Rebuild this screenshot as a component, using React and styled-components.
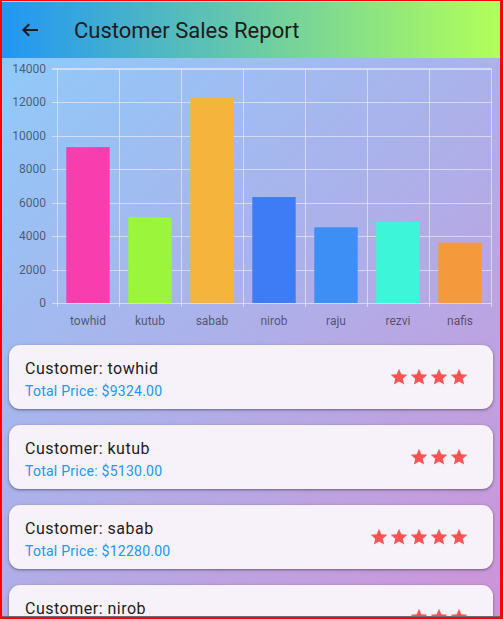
import React from "react";
import styled, { createGlobalStyle } from "styled-components";

const Global = createGlobalStyle`
  * { box-sizing: border-box; }
  html, body { margin: 0; padding: 0; background: #fff; }
  body { font-family: Roboto, "Noto Sans", "Liberation Sans", sans-serif; }
`;

const Frame = styled.div`
  width: 503px;
  height: 619px;
  border-style: solid;
  border-color: #ff0000;
  border-width: 1px 3px 2px 2px;
  display: flex;
  flex-direction: column;
  overflow: hidden;
`;

const AppBar = styled.header`
  flex: 0 0 57px;
  display: flex;
  align-items: center;
  border-top: 1px solid rgba(225, 228, 232, 0.8);
  background: linear-gradient(to right, #2196f3, #b2ff59);
`;

const Leading = styled.button`
  width: 56px;
  height: 56px;
  border: 0;
  padding: 0;
  background: transparent;
  display: flex;
  align-items: center;
  justify-content: center;
  color: #1d1b20;
  cursor: pointer;
`;

const Title = styled.h1`
  margin: 0 0 0 16px;
  font-size: 22px;
  font-weight: 400;
  line-height: 28px;
  color: #1d1b20;
  position: relative;
  top: 1px;
`;

const Body = styled.main`
  flex: 1 1 auto;
  overflow: hidden;
  background: linear-gradient(138.25deg, #90caf9, #ce93d8);
  border-bottom: 1px solid #6b6870;
  display: flex;
  flex-direction: column;
`;

const ChartBox = styled.section`
  flex: 0 0 279px;
  height: 279px;
`;

const AxisText = styled.text`
  font-family: Roboto, "Noto Sans", sans-serif;
  font-size: 12px;
  fill: rgba(0, 0, 0, 0.55);
`;

const List = styled.div`
  display: flex;
  flex-direction: column;
  gap: 16px;
  padding: 8px 7px 0 7px;
`;

const Card = styled.article`
  flex: 0 0 64px;
  height: 64px;
  background: #f7f2fa;
  border-radius: 11px;
  box-shadow: 0 1px 2px rgba(0, 0, 0, 0.28), 0 1px 3px 1px rgba(0, 0, 0, 0.12);
  display: flex;
  align-items: center;
  padding: 0 24px 0 16px;
`;

const Texts = styled.div`
  flex: 1 1 auto;
  display: flex;
  flex-direction: column;
  padding-top: 3px;
`;

const CardTitle = styled.div`
  font-size: 16px;
  line-height: 24px;
  letter-spacing: 0.5px;
  color: #1d1b20;
`;

const CardSub = styled.div`
  font-size: 14px;
  line-height: 20px;
  letter-spacing: 0.25px;
  color: #2196f3;
`;

const Stars = styled.div`
  display: flex;
  align-items: center;
`;

const StarIcon = () => (
  <svg width="20" height="20" viewBox="0 0 24 24" aria-hidden="true">
    <path
      fill="#ff5252"
      d="M12 17.27L18.18 21l-1.64-7.03L22 9.24l-7.19-.61L12 2 9.19 8.63 2 9.24l5.46 4.73L5.82 21z"
    />
  </svg>
);

const BackIcon = () => (
  <svg width="24" height="24" viewBox="0 0 24 24" aria-hidden="true">
    <path
      d="M20 12H5.2M11.2 6.2L5.4 12l5.8 5.8"
      fill="none"
      stroke="#1d1b20"
      strokeWidth="2"
      strokeLinecap="butt"
      strokeLinejoin="miter"
    />
  </svg>
);

const data = [
  { name: "towhid", value: 9324, color: "#f83dae", stars: 4 },
  { name: "kutub", value: 5130, color: "#9bf53b", stars: 3 },
  { name: "sabab", value: 12280, color: "#f5b53d", stars: 5 },
  { name: "nirob", value: 6340, color: "#3d7cf5", stars: 3 },
  { name: "raju", value: 4530, color: "#3d8ef5", stars: 3 },
  { name: "rezvi", value: 4850, color: "#3df5d8", stars: 3 },
  { name: "nafis", value: 3610, color: "#f5993d", stars: 2 },
];

const Chart = () => {
  const left = 55;
  const right = 489;
  const top = 11;
  const bottom = 245;
  const col = (right - left) / 7;
  const unit = (bottom - top) / 14000;
  const grid = "rgba(230, 230, 240, 0.75)";
  const yTicks = [0, 2000, 4000, 6000, 8000, 10000, 12000, 14000];
  return (
    <svg width="498" height="279" viewBox="0 0 498 279">
      {yTicks.map((t) => {
        const y = Math.round(bottom - t * unit);
        return (
          <line
            key={"h" + t}
            x1={50}
            x2={right + 0.5}
            y1={t === 14000 ? y : y + 0.5}
            y2={t === 14000 ? y : y + 0.5}
            stroke={grid}
            strokeWidth={t === 14000 ? 2 : 1}
          />
        );
      })}
      {Array.from({ length: 8 }).map((_, i) => {
        const x = Math.round(left + i * col) + 0.5;
        return (
          <line key={"v" + i} x1={x} x2={x} y1={top} y2={bottom + 4} stroke={grid} strokeWidth={1} />
        );
      })}
      {data.map((d, i) => {
        const cx = left + col * (i + 0.5);
        const w = 43.4;
        const h = d.value * unit;
        return <rect key={d.name} x={cx - w / 2} y={bottom - h} width={w} height={h} fill={d.color} />;
      })}
      {yTicks.map((t) => (
        <AxisText key={"yl" + t} x={44} y={bottom - t * unit} textAnchor="end" dominantBaseline="central">
          {t}
        </AxisText>
      ))}
      {data.map((d, i) => (
        <AxisText key={"xl" + d.name} x={left + col * (i + 0.5)} y={262.5} textAnchor="middle" dominantBaseline="central">
          {d.name}
        </AxisText>
      ))}
    </svg>
  );
};

export default function App() {
  return (
    <>
      <Global />
      <Frame>
        <AppBar>
          <Leading aria-label="Back">
            <BackIcon />
          </Leading>
          <Title>Customer Sales Report</Title>
        </AppBar>
        <Body>
          <ChartBox>
            <Chart />
          </ChartBox>
          <List>
            {data.slice(0, 4).map((d) => (
              <Card key={d.name}>
                <Texts>
                  <CardTitle>Customer: {d.name}</CardTitle>
                  <CardSub>Total Price: ${d.value.toFixed(2)}</CardSub>
                </Texts>
                <Stars>
                  {Array.from({ length: d.stars }).map((_, i) => (
                    <StarIcon key={i} />
                  ))}
                </Stars>
              </Card>
            ))}
          </List>
        </Body>
      </Frame>
    </>
  );
}
